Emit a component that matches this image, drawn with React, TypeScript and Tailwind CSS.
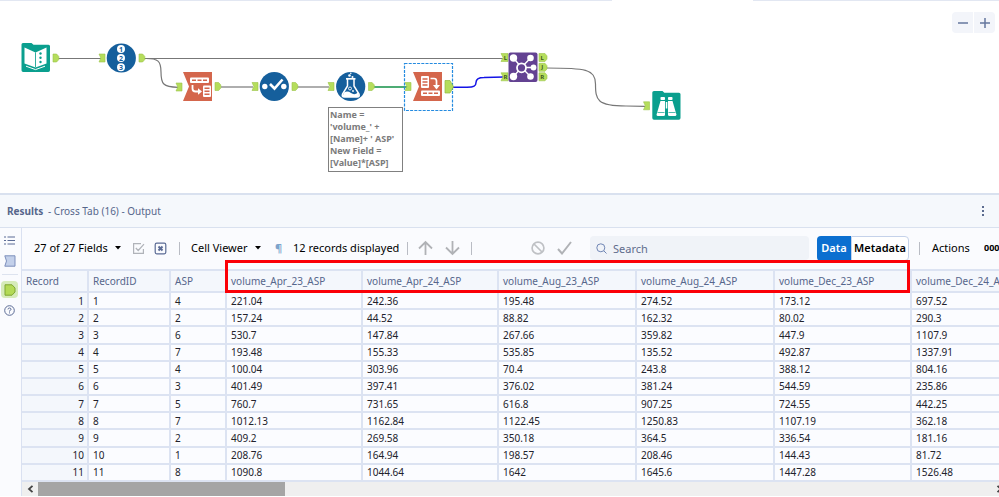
import React from "react";

const columns = [
  { name: "Record", width: "w-[67px]" },
  { name: "RecordID", width: "w-[82px]" },
  { name: "ASP", width: "w-[56px]" },
  { name: "volume_Apr_23_ASP", width: "w-[136px]" },
  { name: "volume_Apr_24_ASP", width: "w-[136px]" },
  { name: "volume_Aug_23_ASP", width: "w-[138px]" },
  { name: "volume_Aug_24_ASP", width: "w-[138px]" },
  { name: "volume_Dec_23_ASP", width: "w-[137px]" },
  { name: "volume_Dec_24_ASP", width: "w-[137px]" },
];

const rows = [
  ["1", "1", "4", "221.04", "242.36", "195.48", "274.52", "173.12", "697.52"],
  ["2", "2", "2", "157.24", "44.52", "88.82", "162.32", "80.02", "290.3"],
  ["3", "3", "6", "530.7", "147.84", "267.66", "359.82", "447.9", "1107.9"],
  ["4", "4", "7", "193.48", "155.33", "535.85", "135.52", "492.87", "1337.91"],
  ["5", "5", "4", "100.04", "303.96", "70.4", "243.8", "388.12", "804.16"],
  ["6", "6", "3", "401.49", "397.41", "376.02", "381.24", "544.59", "235.86"],
  ["7", "7", "5", "760.7", "731.65", "616.8", "907.25", "724.55", "442.25"],
  ["8", "8", "7", "1012.13", "1162.84", "1122.45", "1250.83", "1107.19", "362.18"],
  ["9", "9", "2", "409.2", "269.58", "350.18", "364.5", "336.54", "181.16"],
  ["10", "10", "1", "208.76", "164.94", "198.57", "208.46", "144.43", "81.72"],
  ["11", "11", "8", "1090.8", "1044.64", "1642", "1645.6", "1447.28", "1526.48"],
];

function InAnchor({ x, y }: { x: number; y: number }) {
  return <path d={`M${x} ${y - 4}h6v8h-6l1.8-4z`} fill="#b5dd5c" stroke="#9cc54a" strokeWidth="0.6" />;
}

function OutAnchor({ x, y }: { x: number; y: number }) {
  return <path d={`M${x} ${y - 4}h3.6l2.2 2.4v3.2l-2.2 2.4h-3.6z`} fill="#b5dd5c" stroke="#9cc54a" strokeWidth="0.6" />;
}

function JoinAnchor({ x, y, letter, input }: { x: number; y: number; letter: string; input?: boolean }) {
  return (
    <g>
      <path
        d={input ? `M${x} ${y - 4}h7v8h-7l2-4z` : `M${x} ${y - 4}h6l2 2.4v3.2l-2 2.4h-6z`}
        fill="#b5dd5c"
        stroke="#9cc54a"
        strokeWidth="0.6"
      />
      <text x={x + (input ? 4.4 : 3.2)} y={y + 2} textAnchor="middle" fontSize="6" fontWeight="700" fill="#3f5a20">
        {letter}
      </text>
    </g>
  );
}

function Workflow() {
  return (
    <svg width="720" height="190" viewBox="0 0 720 190" fill="none" className="absolute left-0 top-0" aria-label="Workflow">
      <g stroke="#777" strokeWidth="1.2">
        <path d="M58 58.5H101" />
        <path d="M144 58.5H504" />
        <path d="M146 58.5C158 58.5 161 61 161 72C161 84 163 87 178 87.3" />
        <path d="M221 87H253" />
        <path d="M297 87H329" />
        <path d="M546 68C585 68 595.500 69 595.500 84C595.500 100 597 106 626 106L645 106.300" />
      </g>
      <path d="M374 87H407" stroke="#129046" strokeWidth="1.5" />
      <path d="M453 87.300H467C474 87.300 476 86 476 82.500C476 79 478 77.500 484 77.500L504 77" stroke="#1414e6" strokeWidth="1.500" />

      {/* Input data */}
      <path d="M23 43h8.500l2 1.800h15q1.500 0 1.500 1.500v24q0 1.700-1.700 1.700H23.200q-1.700 0-1.700-1.700V44.500q0-1.500 1.500-1.500z" fill="#0a9f8e" />
      <path d="M24.500 47.500L35.500 52.500V67.500L24.500 63.500z" fill="#fff" />
      <path d="M46.500 47.500L35.500 52.500V67.500L46.500 63.500z" fill="#fff" />
      <path d="M35.500 52.500V67M26.500 65.800L35.500 69L44.500 65.800" stroke="#0a9f8e" strokeWidth="0.8" />
      <path d="M26 66.200L35.500 69.600L45 66.200" stroke="#fff" strokeWidth="1" />
      <g fill="#0a9f8e">
        <circle cx="40.500" cy="53.500" r="1.200" />
        <circle cx="40.500" cy="57.800" r="1.200" />
        <circle cx="40.500" cy="62" r="1.200" />
      </g>
      <OutAnchor x={53} y={58} />

      {/* Record ID */}
      <InAnchor x={99} y={58} />
      <circle cx="121.300" cy="58" r="14.600" fill="#155f9c" />
      {["1", "2", "3"].map((n, i) => (
        <g key={n}>
          <circle cx="121" cy={49 + i * 9.100} r="4" fill="#fff" />
          <text x="121" y={51.500 + i * 9.100} textAnchor="middle" fontSize="7" fontWeight="700" fill="#155f9c">
            {n}
          </text>
        </g>
      ))}
      <OutAnchor x={139} y={58} />

      {/* Transpose */}
      <InAnchor x={176} y={87} />
      <path d="M183 72H212V101H183L189 86.500z" fill="#d4664c" />
      <rect x="190" y="77.500" width="19" height="5.500" rx="1" fill="#fff" />
      <path d="M192 80.300h4M197.500 80.300h4M203 80.300h4" stroke="#d4664c" strokeWidth="1.600" />
      <path d="M192.500 85V88.500Q192.500 91.500 195.500 91.500H200" stroke="#fff" strokeWidth="1.800" />
      <path d="M198 88.200L202 91.500L198 94.800z" fill="#fff" />
      <rect x="203" y="85.500" width="8" height="11.500" rx="1" fill="#fff" />
      <path d="M204.500 88.200h5M204.500 91.200h5M204.500 94.300h5" stroke="#d4664c" strokeWidth="1.500" />
      <OutAnchor x={215} y={86.500} />

      {/* Select */}
      <InAnchor x={252} y={86.500} />
      <circle cx="274.300" cy="86.500" r="14.600" fill="#155f9c" />
      <circle cx="264.800" cy="86.500" r="2.700" fill="#fff" />
      <circle cx="283.800" cy="86.500" r="2.700" fill="#fff" />
      <path d="M270 84L274.500 88.500L282.500 79.500" stroke="#fff" strokeWidth="2.600" />
      <OutAnchor x={292} y={86.500} />

      {/* Formula */}
      <InAnchor x={328} y={86.500} />
      <circle cx="350.700" cy="86.500" r="14.600" fill="#155f9c" />
      <path d="M347.500 79V86L342.500 94Q341.500 97 344.500 97H357Q360 97 359 94L354 86V79" fill="#155f9c" stroke="#fff" strokeWidth="1.500" />
      <path d="M346 78.800H355.500" stroke="#fff" strokeWidth="1.700" />
      <path d="M344 92.500Q347.500 90.500 351 93T358 92.500L359 95Q359 97 357 97H345Q342.500 97 343 95z" fill="#fff" />
      <circle cx="350" cy="88.500" r="1.500" stroke="#fff" strokeWidth="0.900" />
      <circle cx="353" cy="91" r="0.900" fill="#fff" />
      <circle cx="349.500" cy="75.500" r="1.300" fill="#fff" />
      <circle cx="352.500" cy="77" r="1" fill="#fff" />
      <circle cx="350.800" cy="73.200" r="0.800" fill="#fff" />
      <OutAnchor x={368.500} y={86.500} />

      {/* Cross tab */}
      <rect x="404.500" y="63.500" width="48" height="47" stroke="#258be0" strokeWidth="1.200" strokeDasharray="3 1.200" />
      <InAnchor x={405} y={86.500} />
      <path d="M413 72H442V101H413L419 86.500z" fill="#d4664c" />
      <rect x="421" y="76" width="8" height="12" rx="1" fill="#fff" />
      <path d="M422.500 79h5M422.500 82h5M422.500 85h5" stroke="#d4664c" strokeWidth="1.500" />
      <path d="M430.500 78.500H434Q436.500 78.500 436.500 81V86" stroke="#fff" strokeWidth="1.700" />
      <path d="M433 85L436.500 89.500L440 85z" fill="#fff" />
      <rect x="421" y="90.500" width="19" height="5.500" rx="1" fill="#fff" />
      <path d="M423 93.300h4M428.500 93.300h4M434 93.300h4" stroke="#d4664c" strokeWidth="1.600" />
      <path d="M445 80.500H450L453.500 86.800L450 93H445z" fill="#b5dd5c" stroke="#8fb93c" strokeWidth="0.700" />

      {/* Join */}
      <JoinAnchor x={501} y={57.500} letter="L" input />
      <JoinAnchor x={501} y={76.800} letter="R" input />
      <JoinAnchor x={539} y={57.500} letter="L" />
      <JoinAnchor x={539} y={67.300} letter="J" />
      <JoinAnchor x={539} y={76.800} letter="R" />
      <rect x="508.500" y="52.500" width="29" height="29.500" rx="2" fill="#634292" />
      <path d="M513.500 58L521.500 67.500L513.500 76.500M530.500 58L521.500 67.500L530.500 76.500M521.500 67.500H533" stroke="#fff" strokeWidth="1.400" />
      <g fill="#fff">
        <circle cx="513.500" cy="58" r="3.700" />
        <circle cx="513.500" cy="76.500" r="3.700" />
        <circle cx="530.500" cy="58" r="3.300" />
        <circle cx="530.500" cy="76.500" r="3.300" />
        <circle cx="533.500" cy="67.500" r="2.900" />
      </g>
      <circle cx="521.500" cy="67.800" r="4.500" fill="#634292" stroke="#fff" strokeWidth="1.800" />

      {/* Browse */}
      <InAnchor x={643.500} y={105.800} />
      <path d="M654 91h8.500l1.800 1.800h14.700q1.500 0 1.500 1.500v23.700q0 1.700-1.700 1.700H654q-1.700 0-1.700-1.700V92.500q0-1.500 1.700-1.500z" fill="#0a9f8e" />
      <g fill="#fff">
        <rect x="660.500" y="97" width="4.500" height="3" rx="0.800" />
        <rect x="668" y="97" width="4.500" height="3" rx="0.800" />
        <path d="M660.500 101H665V114.500Q665 116 663.500 116H658Q656.500 116 656.600 114.500z" />
        <path d="M672.500 101H668V114.500Q668 116 669.500 116H675Q676.500 116 676.400 114.500z" />
        <rect x="665.800" y="102" width="1.500" height="6.500" />
      </g>
      <path d="M657.500 112.500H664.500M668.500 112.500H675.500" stroke="#0a9f8e" strokeWidth="0.700" />
    </svg>
  );
}

function Canvas() {
  return (
    <section className="relative h-[193px] overflow-hidden bg-white">
      <div className="flex h-px justify-between">
        <span className="w-[612px] bg-[#e2e7f2]" />
        <span className="w-[246px] bg-[#e2e7f2]" />
      </div>
      <Workflow />
      <p className="absolute left-[328px] top-[107px] h-[65px] w-[75px] whitespace-pre border border-[#808080] bg-white pl-px pt-px text-[9px] font-bold leading-[12px] text-[#7b7b7b]">
        {"Name =\n'volume_' +\n[Name]+ ' ASP'\nNew Field =\n[Value]*[ASP]"}
      </p>
      <div className="absolute right-1 top-3 flex gap-px text-[#66779e]">
        <button aria-label="Zoom out" className="flex h-[21px] w-[21px] items-center justify-center rounded-l bg-[#f3f5fa]">
          <svg width="12" height="12" stroke="currentColor" strokeWidth="1.500"><path d="M1 6H11" /></svg>
        </button>
        <button aria-label="Zoom in" className="flex h-[21px] w-[21px] items-center justify-center rounded-r bg-[#f3f5fa]">
          <svg width="12" height="12" stroke="currentColor" strokeWidth="1.500"><path d="M1 6H11M6 1V11" /></svg>
        </button>
      </div>
    </section>
  );
}

function Sidebar() {
  return (
    <nav className="flex w-[22px] shrink-0 flex-col items-center border-r border-[#dae1f1] bg-[#fafbfe] pt-1.5 pr-0.5">
      <button aria-label="Messages" className="flex h-[13px] items-center">
        <svg width="11" height="9" fill="none" stroke="#5b6b95" strokeWidth="1">
          <path d="M0 1H2M3.500 1H11M0 4.500H2M3.500 4.500H11M0 8H2M3.500 8H11" />
        </svg>
      </button>
      <button aria-label="Input anchor" className="mt-2 flex h-[12px] items-center">
        <svg width="12" height="12" fill="#c3d0ea" stroke="#7d8fbc">
          <path d="M0.800 0.800H11V11.200H0.800L2.500 6z" />
        </svg>
      </button>
      <span className="mt-[7px] h-px w-4 bg-[#dde3ef]" />
      <button aria-label="Output anchor" className="mt-[6px] flex h-[17px] w-[17px] items-center justify-center rounded-sm bg-[#d6ebb9]">
        <svg width="12" height="12" fill="#b3da55" stroke="#7fa632">
          <path d="M1 0.800H8L11 4V8L8 11.200H1z" />
        </svg>
      </button>
      <button aria-label="Help" className="mt-[7px] flex h-[11px] items-center">
        <svg width="11" height="11" viewBox="0 0 11 11" fill="none" stroke="#5b6b95">
          <circle cx="5.500" cy="5.500" r="4.800" />
          <path d="M4 4.400Q4 3 5.500 3T7 4.400Q7 5.200 5.500 5.800V6.500M5.500 7.400V8.400" />
        </svg>
      </button>
    </nav>
  );
}

function Caret() {
  return <svg width="6" height="4" className="ml-[7px] shrink-0" fill="#000"><path d="M0 0H6L3 3.500z" /></svg>;
}

function Divider() {
  return <span className="h-[13px] w-px bg-[#b9bcc4]" />;
}

function Toolbar() {
  return (
    <div className="flex h-[41px] shrink-0 items-center bg-[#fafbfe] pb-px pl-3 text-[11px] text-black">
      <button className="flex w-[86px] items-center whitespace-nowrap">27 of 27 Fields<Caret /></button>
      <button aria-label="Select all" className="ml-3">
        <svg width="13" height="13" fill="none" stroke="#b0b3b9" strokeWidth="1.200">
          <path d="M9 1.600H1.600V11.400H11.400V7M3.800 6L6.200 8.500L12 2.200" />
        </svg>
      </button>
      <button aria-label="Deselect all" className="ml-[9px]">
        <svg width="13" height="13" fill="none" stroke="#5b6b95" strokeWidth="1.200">
          <rect x="1.200" y="1.200" width="10.600" height="10.600" rx="1.500" />
          <path d="M4.500 4.500L8.500 8.500M8.500 4.500L4.500 8.500" strokeWidth="2" />
        </svg>
      </button>
      <span className="ml-3 flex"><Divider /></span>
      <button className="ml-[11px] flex w-[71px] items-center whitespace-nowrap">Cell Viewer<Caret /></button>
      <button aria-label="Show whitespace" className="ml-[13px] w-[7px] font-bold text-[#7da3cc]">¶</button>
      <span className="ml-[11px] w-[103px] whitespace-nowrap">12 records displayed</span>
      <span className="ml-[11px] flex"><Divider /></span>
      <button aria-label="Previous" className="ml-[10px]">
        <svg width="15" height="16" fill="none" stroke="#b0b2b6" strokeWidth="1.800"><path d="M7.500 15V2M1 8.500L7.500 2L14 8.500" /></svg>
      </button>
      <button aria-label="Next" className="ml-3">
        <svg width="15" height="16" fill="none" stroke="#b0b2b6" strokeWidth="1.800"><path d="M7.500 1V14M1 7.500L7.500 14L14 7.500" /></svg>
      </button>
      <span className="ml-[11px] flex"><Divider /></span>
      <button aria-label="Cancel" className="ml-[59px]">
        <svg width="14" height="14" fill="none" stroke="#bfc1c5" strokeWidth="1.700"><circle cx="7" cy="7" r="5.900" /><path d="M3 3L11 11" /></svg>
      </button>
      <button aria-label="Apply" className="ml-3">
        <svg width="15" height="14" fill="none" stroke="#b0b2b6" strokeWidth="2"><path d="M1 8L5 12.500L14 1" /></svg>
      </button>
      <label className="ml-[18px] flex h-6 min-w-0 flex-1 items-center gap-1.5 rounded bg-[#f0f3f8] pl-1.5">
        <svg width="11" height="11" fill="none" stroke="#6f85b4" className="shrink-0"><circle cx="4.800" cy="4.800" r="4" /><path d="M7.800 7.800L10.500 10.500" /></svg>
        <input type="search" aria-label="Search results" placeholder="Search" className="h-full w-full min-w-0 bg-transparent outline-none placeholder:text-[#5f6c8c]" />
      </label>
      <div className="ml-2 flex h-[25px] shrink-0 font-semibold">
        <button className="w-[34px] rounded-l-sm bg-[#0b6fd0] text-white">Data</button>
        <button className="w-[58px] rounded-r-sm border border-[#c5d2ea] bg-white">Metadata</button>
      </div>
      <span className="ml-[10px] flex"><Divider /></span>
      <button className="ml-3 w-[40px] text-left">Actions</button>
      <button className="ml-3 w-[15px] overflow-hidden text-left text-[9px] font-bold">000</button>
    </div>
  );
}

function ResultsTable() {
  return (
    <div className="relative">
      <div className="overflow-hidden">
        <table className="h-[213px] w-[1027px] table-fixed border-separate border-spacing-0 border-t-2 border-[#dce3f2] text-[10px] leading-[13px]">
          <thead>
            <tr className="h-[22px]">
              {columns.map((column) => (
                <th
                  key={column.name}
                  scope="col"
                  className={`${column.width} whitespace-nowrap border-b-2 border-r-2 border-[#dce3f2] bg-[#f4f7fc] py-0 pl-1 text-left font-normal text-[#56668b]`}
                >
                  {column.name}
                </th>
              ))}
            </tr>
          </thead>
          <tbody>
            {rows.map((row) => (
              <tr key={row[0]}>
                {row.map((value, i) => (
                  <td
                    key={columns[i].name}
                    className={`border-b-2 border-r-2 border-[#dce3f2] pb-0 pt-px text-[#22222c] ${i === 0 ? "bg-[#f4f7fc] pr-[3px] text-right" : "bg-[#fbfcff] pl-1"}`}
                  >
                    {value}
                  </td>
                ))}
              </tr>
            ))}
          </tbody>
        </table>
      </div>
      <div className="pointer-events-none absolute -top-[9px] left-[203px] h-[33px] w-[685px] border-[3px] border-[#fb0007]" />
    </div>
  );
}

function Scrollbar() {
  return (
    <div className="flex h-[14px] items-center bg-[#efefef]">
      <button aria-label="Scroll left" className="flex w-4 justify-center">
        <svg width="7" height="8" fill="none" stroke="#444" strokeWidth="1.800"><path d="M5.500 0.800L2 4L5.500 7.200" /></svg>
      </button>
      <span className="h-full w-[247px] bg-[#a5a5a5]" />
      <button aria-label="Scroll right" className="-mr-1 ml-auto flex">
        <svg width="7" height="8" fill="none" stroke="#444" strokeWidth="1.800"><path d="M1.500 0.800L5 4L1.500 7.200" /></svg>
      </button>
    </div>
  );
}

export default function App() {
  return (
    <main className="w-full overflow-hidden bg-white font-['Noto_Sans','Open_Sans',sans-serif]">
      <Canvas />
      <section className="bg-[#f5f8fc]">
        <header className="flex h-[35px] items-center justify-between border-b border-t-2 border-[#d9e1ef] pl-[7px] pr-3 text-[10px] text-[#56668b]">
          <h2><b className="mr-0.5 font-bold">Results</b> - Cross Tab (16) - Output</h2>
          <button aria-label="More options">
            <svg width="8" height="10" fill="#5b6b8f"><path d="M3 0h2v2h-2zM3 4h2v2h-2zM3 8h2v2h-2z" /></svg>
          </button>
        </header>
        <div className="flex">
          <Sidebar />
          <div className="min-w-0 flex-1">
            <Toolbar />
            <ResultsTable />
            <Scrollbar />
          </div>
        </div>
      </section>
    </main>
  );
}
